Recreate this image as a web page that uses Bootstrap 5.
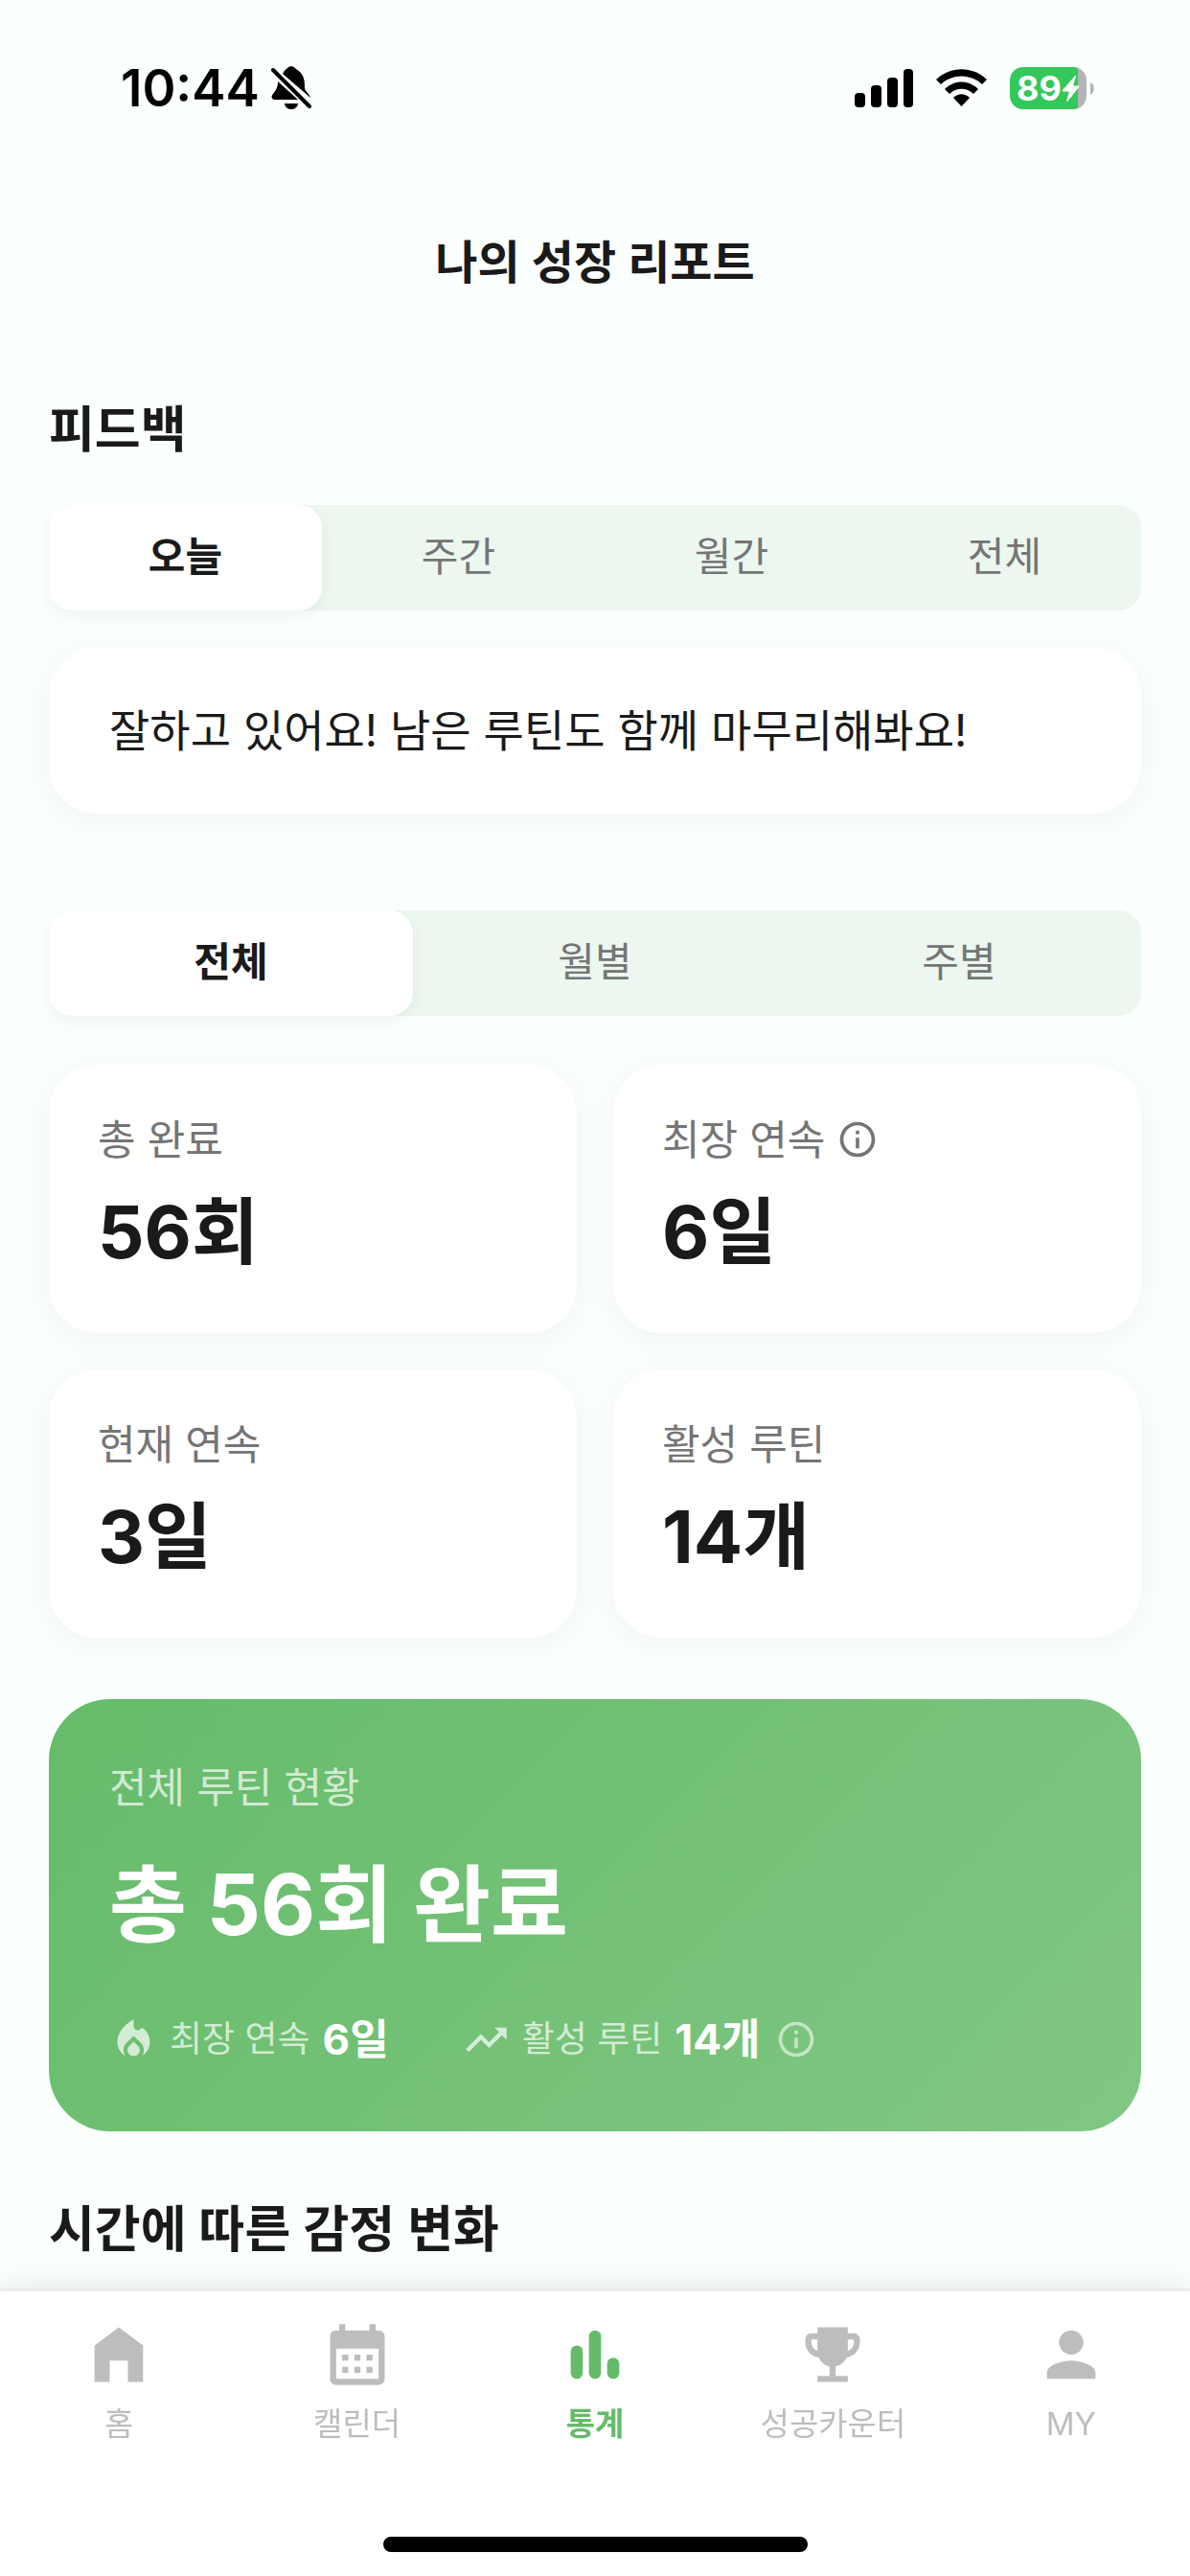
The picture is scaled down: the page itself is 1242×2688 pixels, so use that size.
<!DOCTYPE html>
<html lang="ko">
<head>
<meta charset="utf-8">
<meta name="viewport" content="width=device-width, initial-scale=1">
<title>나의 성장 리포트</title>
<link href="https://cdn.jsdelivr.net/npm/bootstrap@5.3.0/dist/css/bootstrap.min.css" rel="stylesheet">
<style>
  :root { --ink: #1a1a1a; --muted: #757575; --idle: #bdbdbd; --green: #66bb6a; --gutter: 51px; }
  body { background: #fbfffe; color: var(--ink); font-family: Inter, "Noto Sans CJK KR", sans-serif; font-size: 42px; line-height: 60px; }
  svg { display: block; fill: currentColor; flex: none; }
  .status-bar { height: 184px; padding: 0 100px 0 126px; color: #000; }
  .clock { font-size: 53px; font-weight: 600; margin-right: 12px; }
  .battery { width: 88px; height: 44px; }
  .battery-level { width: 80px; height: 44px; border-radius: 14px; background: linear-gradient(90deg, #34c759 89%, #b4b4b6 89%); color: #fff; font-size: 36px; line-height: 44px; font-weight: 700; padding-left: 7px; }
  .title-bar { height: 180px; }
  .page-title, .section-title { font-weight: 600; margin: 0; line-height: 64px; }
  .page-title { font-size: 48px; }
  .section-title { font-size: 52px; }
  .report { padding: 53px var(--gutter) 300px; }
  .seg { background: #ebf7ef; border-radius: 24px; }
  .seg-first { margin-top: 46px; }
  .seg .nav-link { height: 110px; padding: 0 0 2px; border: 0; background: none; border-radius: 24px; color: var(--muted); }
  .seg .nav-link.active { background: #fff; color: var(--ink); font-weight: 700; box-shadow: 0 6px 18px rgba(0,0,0,.05); }
  .seg .nav-item, .tabbar .nav-item { flex-basis: 0; }
  .panel { border: 0; border-radius: 50px; background: #fff; color: var(--ink); box-shadow: 0 6px 36px rgba(0,0,0,.05); }
  .feedback { padding: 57px 63px; font-size: 46px; margin-top: 38px; margin-bottom: 101px; }
  .stats { --bs-gutter-x: 38px; --bs-gutter-y: 38px; margin-top: 13px; }
  .stat { height: 280px; padding: 48px 51px; }
  .stat-label { color: var(--muted); font-size: 43px; }
  .stat-value { font-size: 76px; line-height: 88px; font-weight: 700; margin-top: 22px; }
  .icon-btn { padding: 0; border: 0; color: inherit; background: none; }
  .summary { margin-top: 64px; padding: 62px 63px 0; height: 451px; border-radius: 64px; color: #fff; background: linear-gradient(135deg, #66bb6a, #81c784); }
  .summary-label { font-size: 43px; }
  .soft { color: rgba(255,255,255,.7); }
  .summary-value { font-size: 88px; line-height: 104px; font-weight: 700; margin-top: 40px; }
  .summary-row { margin-top: 59px; font-size: 37px; }
  .summary-row strong { font-size: 44px; margin-left: 13px; }
  .summary-gap { margin-left: 76px; }
  .next-title { margin-top: 71px; }
  .tabbar { height: 300px; background: #fff; border-top: 3px solid #ededed; box-shadow: 0 -6px 24px rgba(0,0,0,.08); }
  .tabbar .nav-link { padding: 28px 0 0; color: var(--idle); font-size: 33px; line-height: 48px; }
  .tabbar .nav-link.active { color: var(--green); font-weight: 700; }
  .tab-text { margin-top: 10px; }
  .home-line { width: 443px; height: 16px; border-radius: 8px; background: #000; margin-bottom: 25px; }
</style>
</head>
<body>
<header>
  <div class="status-bar d-flex align-items-center justify-content-between">
    <div class="d-flex align-items-center">
      <span class="clock">10:44</span>
      <svg width="42" height="46" viewBox="0 0 42 46" aria-label="무음">
        <path d="M12 8C14 4 16 3 17 2c2-2.500 6-2.500 8 0 1 1.500 3 2 5 4 5 5 5 11 5 17 1 4 5 6 6 10zM7 16l21 19H3c-3-1-3-4-1-6 3-4 5-7 5-13zM14 39h14c-1 8-13 8-14 0z"/>
        <path d="M2 4l38 38" stroke="#000" stroke-width="4" stroke-linecap="round"/>
      </svg>
    </div>
    <div class="d-flex align-items-center">
      <svg width="61" height="40" viewBox="0 0 61 40" aria-label="신호"><rect y="25" width="11" height="15" rx="4"/><rect x="17" y="17" width="11" height="23" rx="4"/><rect x="34" y="9" width="11" height="31" rx="4"/><rect x="51" width="10" height="40" rx="4"/></svg>
      <svg class="ms-4" width="53" height="40" viewBox="0 0 53 40" aria-label="와이파이"><path d="M0 11C15-3.500 38-3.500 53 11l-5 5C36 4.500 17 4.500 5 16zM9 21c10-10 25-10 35 0l-5 5c-7-7-18-7-25 0zM18 30c5-5 12-5 17 0l-8.500 9z"/></svg>
      <div class="battery d-flex align-items-center ms-4">
        <div class="battery-level d-flex align-items-center">89<svg width="19" height="27" viewBox="0 0 19 27"><path d="M14 0L1 15c-.6 1 0 1.500 1 1.500h6L5 26c0 1 1 1 2 0l11-14c.6-1 0-1.500-1-1.500h-5L15 1c0-1-.500-1-1-1z"/></svg></div>
        <svg class="ms-1" width="4" height="13" viewBox="0 0 4 13"><path d="M0 0c5 2 5 11 0 13z" fill="#b4b4b6"/></svg>
      </div>
    </div>
  </div>
  <div class="title-bar d-flex align-items-center justify-content-center"><h1 class="page-title">나의 성장 리포트</h1></div>
</header>

<main class="report">
  <h2 class="section-title">피드백</h2>
  <div class="seg seg-first nav nav-fill" role="tablist">
    <button class="nav-link nav-item active" type="button" role="tab" aria-selected="true">오늘</button>
    <button class="nav-link nav-item" type="button" role="tab">주간</button>
    <button class="nav-link nav-item" type="button" role="tab">월간</button>
    <button class="nav-link nav-item" type="button" role="tab">전체</button>
  </div>
  <div class="panel card feedback">잘하고 있어요! 남은 루틴도 함께 마무리해봐요!</div>

  <div class="seg nav nav-fill" role="tablist">
    <button class="nav-link nav-item active" type="button" role="tab" aria-selected="true">전체</button>
    <button class="nav-link nav-item" type="button" role="tab">월별</button>
    <button class="nav-link nav-item" type="button" role="tab">주별</button>
  </div>
  <div class="row row-cols-2 stats">
    <div class="col"><div class="panel card stat"><div class="stat-label">총 완료</div><div class="stat-value">56회</div></div></div>
    <div class="col"><div class="panel card stat">
      <div class="stat-label d-flex align-items-center gap-2">최장 연속
        <button class="icon-btn ms-1" type="button" aria-label="최장 연속 안내"><svg width="44" height="44" viewBox="0 0 24 24"><path d="M11 7h2v2h-2zm0 4h2v6h-2zm1-9C6.480 2 2 6.480 2 12s4.480 10 10 10 10-4.480 10-10S17.520 2 12 2zm0 18c-4.410 0-8-3.590-8-8s3.590-8 8-8 8 3.590 8 8-3.590 8-8 8z"/></svg></button>
      </div><div class="stat-value">6일</div></div></div>
    <div class="col"><div class="panel card stat"><div class="stat-label">현재 연속</div><div class="stat-value">3일</div></div></div>
    <div class="col"><div class="panel card stat"><div class="stat-label">활성 루틴</div><div class="stat-value">14개</div></div></div>
  </div>

  <section class="summary">
    <div class="soft summary-label">전체 루틴 현황</div>
    <div class="summary-value">총 56회 완료</div>
    <div class="summary-row d-flex align-items-center">
      <svg class="soft" width="51" height="51" viewBox="0 0 24 24"><path d="M12 12.900l-2.130 2.090C9.310 15.550 9 16.280 9 17.060 9 18.680 10.350 20 12 20s3-1.320 3-2.940c0-.780-.310-1.520-.870-2.070zM16 6l-.440.550C14.380 8.020 12 7.190 12 5.300V2S4 6 4 13c0 2.920 1.560 5.470 3.890 6.860-.560-.790-.890-1.760-.890-2.800 0-1.320.520-2.560 1.470-3.500L12 10.100l3.530 3.470c.950.930 1.470 2.170 1.470 3.500 0 1.020-.310 1.960-.850 2.750 1.890-1.150 3.290-3.060 3.710-5.300.660-3.550-1.070-6.900-3.860-8.520z"/></svg>
      <div class="d-flex align-items-center ms-2 ps-1"><span class="soft">최장 연속</span><strong>6일</strong></div>
      <svg class="soft summary-gap" width="51" height="51" viewBox="0 0 24 24"><path d="M16 6l2.290 2.290-4.880 4.880-4-4L2 16.590 3.410 18l6-6 4 4 6.300-6.290L22 12V6z"/></svg>
      <div class="d-flex align-items-center ms-2 ps-1"><span class="soft">활성 루틴</span><strong>14개</strong></div>
      <button class="icon-btn soft ms-3" type="button" aria-label="활성 루틴 안내"><svg width="44" height="44" viewBox="0 0 24 24" opacity=".8"><path d="M11 7h2v2h-2zm0 4h2v6h-2zm1-9C6.480 2 2 6.480 2 12s4.480 10 10 10 10-4.480 10-10S17.520 2 12 2zm0 18c-4.410 0-8-3.590-8-8s3.590-8 8-8 8 3.590 8 8-3.590 8-8 8z"/></svg></button>
    </div>
  </section>
  <h2 class="section-title next-title">시간에 따른 감정 변화</h2>
</main>

<nav class="tabbar fixed-bottom d-flex flex-column align-items-center justify-content-between">
  <div class="nav nav-fill w-100 flex-nowrap">
    <a class="nav-link nav-item d-flex flex-column align-items-center" href="#"><svg width="76" height="76" viewBox="0 0 24 24"><path d="M4 21V9l8-6 8 6v12h-5v-7H9v7z"/></svg><span class="tab-text">홈</span></a>
    <a class="nav-link nav-item d-flex flex-column align-items-center" href="#"><svg width="76" height="76" viewBox="0 0 24 24"><path fill-rule="evenodd" d="M19 4h-1V2h-2v2H8V2H6v2H5c-1.110 0-2 .900-2 2v14c0 1.100.890 2 2 2h14c1.100 0 2-.900 2-2V6c0-1.100-.900-2-2-2zM5 10h14v10H5zM7 12h2v2H7zM11 12h2v2h-2zM15 12h2v2h-2zM7 16h2v2H7zM11 16h2v2h-2zM15 16h2v2h-2z"/></svg><span class="tab-text">캘린더</span></a>
    <a class="nav-link nav-item active d-flex flex-column align-items-center" href="#" aria-current="page"><svg width="76" height="76" viewBox="0 0 24 24"><rect x="4" y="9" width="4" height="11" rx="2"/><rect x="10" y="4" width="4" height="16" rx="2"/><rect x="16" y="13" width="4" height="7" rx="2"/></svg><span class="tab-text">통계</span></a>
    <a class="nav-link nav-item d-flex flex-column align-items-center" href="#"><svg width="76" height="76" viewBox="0 0 24 24"><path d="M19 5h-2V3H7v2H5c-1.100 0-2 .900-2 2v1c0 2.550 1.920 4.630 4.390 4.940.630 1.500 1.980 2.630 3.610 2.960V19H7v2h10v-2h-4v-3.100c1.630-.330 2.980-1.460 3.610-2.960C19.080 12.630 21 10.550 21 8V7c0-1.100-.900-2-2-2zM5 8V7h2v3.820C5.840 10.400 5 9.300 5 8zm14 0c0 1.300-.840 2.400-2 2.820V7h2z"/></svg><span class="tab-text">성공카운터</span></a>
    <a class="nav-link nav-item d-flex flex-column align-items-center" href="#"><svg width="76" height="76" viewBox="0 0 24 24"><circle cx="12" cy="8" r="4"/><path d="M4 20v-2c0-2.660 5.330-4 8-4s8 1.340 8 4v2z"/></svg><span class="tab-text">MY</span></a>
  </div>
  <div class="home-line"></div>
</nav>
<script src="https://cdn.jsdelivr.net/npm/bootstrap@5.3.0/dist/js/bootstrap.bundle.min.js"></script>
</body>
</html>
